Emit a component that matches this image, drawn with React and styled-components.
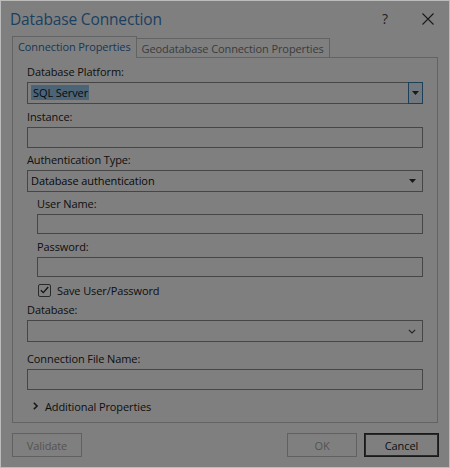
import React from 'react';
import styled, { createGlobalStyle } from 'styled-components';

const GlobalStyle = createGlobalStyle`
  html, body {
    margin: 0;
    padding: 0;
    background: #ffffff;
  }
  body {
    font-family: "Open Sans", "Noto Sans", sans-serif;
    font-size: 11px;
    letter-spacing: -0.1px;
    color: #222222;
  }
  * {
    box-sizing: border-box;
  }
`;

const Dialog = styled.div`
  position: relative;
  width: 450px;
  height: 468px;
  display: flex;
  flex-direction: column;
  background: #ffffff;
  border: 1px solid #bcbcbc;
  overflow: hidden;
`;

const Dim = styled.div`
  position: absolute;
  inset: 0;
  z-index: 5;
  background: rgba(0, 0, 0, 0.5);
  pointer-events: none;
`;

const TitleBar = styled.div`
  height: 35px;
  display: flex;
  align-items: center;
  padding: 0 0 0 9px;
`;

const Title = styled.h1`
  margin: 0;
  font-size: 15.5px;
  font-weight: 400;
  letter-spacing: -0.15px;
  color: #3a7fbf;
  flex: 1;
  padding-top: 1px;
`;

const HelpButton = styled.span`
  width: 16px;
  font-size: 14px;
  color: #444444;
  margin-right: 28px;
  text-align: center;
`;

const CloseButton = styled.span`
  width: 14px;
  height: 14px;
  display: flex;
  align-items: center;
  justify-content: center;
  margin-right: 14px;
`;

const TabRow = styled.div`
  height: 22px;
  margin: 0 11px -1px 11px;
  display: flex;
  align-items: flex-end;
`;

const Tab = styled.div`
  position: ${p => (p.$active ? 'relative' : 'static')};
  z-index: ${p => (p.$active ? 1 : 0)};
  height: ${p => (p.$active ? '22px' : '20px')};
  padding: 0 5px;
  display: flex;
  align-items: center;
  border: 1px solid #c6c6c6;
  border-bottom: ${p => (p.$active ? 'none' : '1px solid #c6c6c6')};
  border-left: ${p => (p.$active ? '1px solid #c6c6c6' : 'none')};
  background: #ffffff;
  color: ${p => (p.$active ? '#2f6fae' : '#777777')};
  white-space: nowrap;
  padding-bottom: ${p => (p.$active ? '2px' : '0')};
`;

const Panel = styled.div`
  height: 366px;
  margin: 0 11px;
  border: 1px solid #c6c6c6;
  padding: 6px 14px 8px 14px;
  display: flex;
  flex-direction: column;
`;

const Field = styled.div`
  display: flex;
  flex-direction: column;
  gap: 2px;
  margin-top: ${p => p.$gap || 0}px;
  padding-left: ${p => (p.$indent ? '10px' : '0')};
`;

const Label = styled.label`
  line-height: 16px;
  color: #222222;
`;

const TextBox = styled.div`
  height: ${p => p.$h || 21}px;
  border: 1px solid #8c8c8c;
  background: #ffffff;
`;

const Select = styled.div`
  height: 22px;
  border: 1px solid #8c8c8c;
  background: #ffffff;
  display: flex;
  align-items: center;
  padding-left: 3px;
  color: #111111;
`;

const SelectText = styled.span`
  flex: 1;
  line-height: 16px;
`;

const Highlight = styled.span`
  background: #99c9ef;
  padding: 0 1px 0 2px;
`;

const DropButton = styled.span`
  width: 15px;
  height: 22px;
  margin: -1px -1px -1px 0;
  border: 1px solid #3c7fb1;
  background: #e5f1fb;
  display: flex;
  align-items: center;
  justify-content: center;
`;

const ArrowBox = styled.span`
  width: 16px;
  display: flex;
  align-items: center;
  justify-content: center;
  margin-right: 2px;
`;

const CheckRow = styled.label`
  display: flex;
  align-items: center;
  gap: 6px;
  height: 16px;
  margin-top: ${p => p.$gap}px;
  padding-left: 11px;
`;

const CheckBox = styled.span`
  width: 13px;
  height: 13px;
  border: 1px solid #555555;
  border-radius: 2px;
  display: flex;
  align-items: center;
  justify-content: center;
  background: #ffffff;
`;

const Expander = styled.div`
  display: flex;
  align-items: center;
  gap: 7px;
  height: 16px;
  margin-top: ${p => p.$gap}px;
  padding-left: 6px;
  color: #1a1a1a;
  font-size: 11px;
`;

const Footer = styled.div`
  margin-top: 10px;
  padding: 0 10px 0 11px;
  display: flex;
  align-items: center;
  gap: 7px;
`;

const Button = styled.button`
  height: 24px;
  width: ${p => p.$w || 70}px;
  font-family: inherit;
  font-size: 11px;
  letter-spacing: -0.1px;
  padding: 0;
  background: #ffffff;
  color: ${p => (p.disabled ? '#a8a8a8' : '#222222')};
  border: 1px solid ${p => (p.disabled ? '#c2c2c2' : '#333333')};
  box-shadow: ${p => (p.$primary ? 'inset 0 0 0 1px #555555' : 'none')};
  margin-left: ${p => (p.$push ? 'auto' : '0')};
`;

const Caret = () => (
  <svg width="7" height="4" viewBox="0 0 7 4">
    <path d="M0 0h7L3.5 4z" fill="#333" />
  </svg>
);

const Chevron = () => (
  <svg width="8" height="5" viewBox="0 0 8 5">
    <path d="M0.8 0.8L4 4l3.2-3.2" fill="none" stroke="#444" strokeWidth="1.1" />
  </svg>
);

const App = () => (
  <>
    <GlobalStyle />
    <Dialog>
      <TitleBar>
        <Title>Database Connection</Title>
        <HelpButton>?</HelpButton>
        <CloseButton>
          <svg width="12" height="12" viewBox="0 0 12 12">
            <path d="M0.5 0.5l11 11M11.5 0.5l-11 11" stroke="#333" strokeWidth="1.1" />
          </svg>
        </CloseButton>
      </TitleBar>

      <TabRow>
        <Tab $active>Connection Properties</Tab>
        <Tab>Geodatabase Connection Properties</Tab>
      </TabRow>

      <Panel>
        <Field>
          <Label>Database Platform:</Label>
          <Select>
            <SelectText>
              <Highlight>SQL Server</Highlight>
            </SelectText>
            <DropButton>
              <Caret />
            </DropButton>
          </Select>
        </Field>

        <Field $gap={5}>
          <Label>Instance:</Label>
          <TextBox />
        </Field>

        <Field $gap={4}>
          <Label>Authentication Type:</Label>
          <Select>
            <SelectText>Database authentication</SelectText>
            <ArrowBox>
              <Caret />
            </ArrowBox>
          </Select>
        </Field>

        <Field $gap={4} $indent>
          <Label>User Name:</Label>
          <TextBox $h={20} />
        </Field>

        <Field $gap={5} $indent>
          <Label>Password:</Label>
          <TextBox $h={20} />
        </Field>

        <CheckRow $gap={5}>
          <CheckBox>
            <svg width="9" height="8" viewBox="0 0 9 8">
              <path d="M0.8 4.2L3.3 6.6L8.2 1" fill="none" stroke="#222" strokeWidth="1.3" />
            </svg>
          </CheckBox>
          Save User/Password
        </CheckRow>

        <Field $gap={4}>
          <Label>Database:</Label>
          <Select>
            <SelectText />
            <ArrowBox>
              <Chevron />
            </ArrowBox>
          </Select>
        </Field>

        <Field $gap={9}>
          <Label>Connection File Name:</Label>
          <TextBox />
        </Field>

        <Expander $gap={8}>
          <svg width="5" height="8" viewBox="0 0 5 8">
            <path d="M0.8 0.8L4 4L0.8 7.2" fill="none" stroke="#333" strokeWidth="1.6" />
          </svg>
          Additional Properties
        </Expander>
      </Panel>

      <Footer>
        <Button disabled>Validate</Button>
        <Button disabled $push>OK</Button>
        <Button $primary $w={75}>Cancel</Button>
      </Footer>

      <Dim />
    </Dialog>
  </>
);

export default App;
